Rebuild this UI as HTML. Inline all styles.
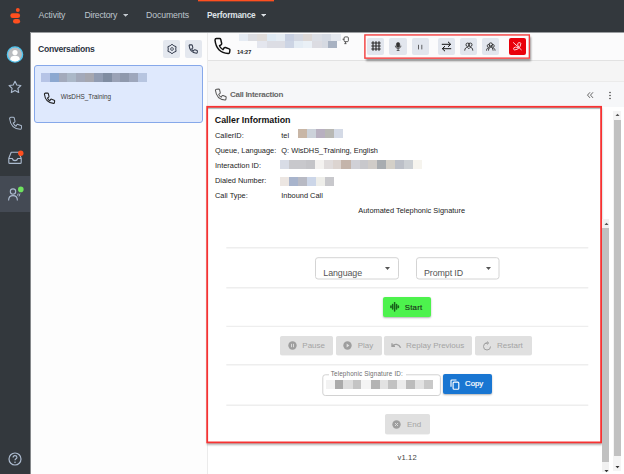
<!DOCTYPE html>
<html lang="en">
<head>
<meta charset="utf-8">
<title>Call Interaction</title>
<style>
*{box-sizing:border-box;margin:0;padding:0}
html,body{width:624px;height:474px;overflow:hidden;background:#fdfdfd;font-family:"Liberation Sans",sans-serif;color:#222}
.abs{position:absolute}
#app{position:relative;width:624px;height:474px;overflow:hidden;background:#fdfdfd}
/* top nav + sidebar */
#topnav{left:0;top:0;width:624px;height:32px;background:#33383d}
#sidebar{left:0;top:0;width:30px;height:474px;background:#33383d}
#sel{left:0;top:176px;width:30px;height:36px;background:#444a54}
.nav{top:9px;font-size:8.7px;line-height:12px;color:#bfc6ce;white-space:nowrap;letter-spacing:-0.1px}
.nav.b{font-weight:bold;color:#dfe3e8;font-size:8.300px;letter-spacing:-0.2px}
.caret{width:0;height:0;border-left:2.8px solid transparent;border-right:2.8px solid transparent;border-top:3px solid #c5cbd1}
#obar{left:198px;top:0;width:76px;height:2px;background:linear-gradient(#ff4f1f 0 50%,#7a4033 50% 100%)}
/* conversations */
#convtitle{left:38px;top:43px;font-size:8.6px;font-weight:bold;color:#2b3342;line-height:12px;letter-spacing:-0.25px}
.sqbtn{width:17.200px;height:17.600px;border-radius:2px;background:#e4e8ef}
#card{left:34px;top:65px;width:169px;height:58px;border:1px solid #86a8ea;border-radius:3px;background:#dfe9fd}
#cardtxt{left:60.800px;top:91.500px;font-size:6.350px;line-height:9px;color:#3a3a3a;}
/* main */
#vline{left:207px;top:32px;width:1px;height:442px;background:#ebebeb}
#topbar{left:208px;top:32px;width:416px;height:29px;background:#fbfbfc;border-bottom:1px solid #e2e2e2}
#strip{left:208px;top:61px;width:416px;height:21px;background:#f5f5f5;border-bottom:1px solid #ebebeb}
#cihead{left:208px;top:82px;width:416px;height:25px;background:#f6f7f9}
#citxt{left:230px;top:89px;font-size:8px;font-weight:bold;color:#666;line-height:12px;letter-spacing:-0.3px}
#time{left:237px;top:48px;font-size:5.6px;font-weight:bold;color:#222;line-height:8px}
#toolbox{left:364.500px;top:34.500px;width:165px;height:24px;background:#fbfbfc;box-shadow:1px 1.500px 2px rgba(0,0,0,.4)}
.tb{top:38.200px;width:17.300px;height:16.500px;border-radius:2px;background:#e2e6ee}
/* red box */
#redbox{left:207px;top:106px;width:395px;height:337px;background:#fff;box-shadow:0 1.500px 2px rgba(0,0,0,.3),inset 0 3px 1px rgba(100,140,140,.55)}
#h1{left:214.800px;top:114px;font-size:8.85px;font-weight:bold;color:#111;line-height:12px}
.lab,.val{font-size:7.400px;line-height:10px;color:#222;white-space:nowrap}
.lab{left:215px}
.val{left:281.3px}
.hr{left:226px;width:362px;height:1px;background:#efefef}
.sel{top:257.300px;width:83.500px;height:22px;border:1px solid #d3d3d3;border-radius:2.5px;background:#fff}
.seltxt{top:266.600px;font-size:8.900px;line-height:12px;color:#555;letter-spacing:-0.1px}
.car2{width:0;height:0;border-left:2.500px solid transparent;border-right:2.500px solid transparent;border-top:2.600px solid #5a5a5a}
.gbtn{top:336px;height:19px;box-shadow:0 0.5px 0.5px rgba(0,0,0,.1);border-radius:2px;background:#e0e0e0}
.gtxt{font-size:8px;line-height:10px;color:#a4a4a4;letter-spacing:0;white-space:nowrap}
</style>
</head>
<body>
<div id="app">
<div id="topnav" class="abs"></div>
<div id="sidebar" class="abs"></div>
<div class="abs" style="left:30px;top:32px;width:594px;height:1px;background:#9a9da0;z-index:5"></div>
<div class="abs" style="left:30px;top:32px;width:1px;height:442px;background:#85888b"></div>
<div id="sel" class="abs"></div>
<div id="obar" class="abs"></div>

<!-- logo -->
<svg class="abs" style="left:8px;top:6px" width="16" height="20" viewBox="0 0 16 20">
 <circle cx="9.8" cy="4" r="1.950" fill="#ff4f1f"/>
 <rect x="2.3" y="7.3" width="9.8" height="4.8" rx="2.4" fill="#ff4f1f"/>
 <rect x="5" y="13" width="7.1" height="4.4" rx="2.2" fill="#ff4f1f"/>
</svg>

<div class="abs nav" style="left:38.6px">Activity</div>
<div class="abs nav" style="left:84.500px;letter-spacing:-0.25px">Directory</div>
<svg class="abs" style="left:122.8px;top:14px" width="5.2" height="2.8" viewBox="0 0 5.2 2.8"><path d="M0 0 H5.2 L2.6 2.8 Z" fill="#c5cbd1"/></svg>
<div class="abs nav" style="left:146px">Documents</div>
<div class="abs nav b" style="left:207px">Performance</div>
<svg class="abs" style="left:261px;top:14px" width="5.2" height="2.8" viewBox="0 0 5.2 2.8"><path d="M0 0 H5.2 L2.6 2.8 Z" fill="#dfe3e8"/></svg>

<!-- sidebar icons -->
<svg class="abs" style="left:6px;top:45px" width="18" height="18" viewBox="0 0 18 18">
 <circle cx="9" cy="9.5" r="7.6" fill="#b9bcc0" stroke="#4fc6f1" stroke-width="1.4"/>
 <circle cx="9" cy="7.6" r="2.6" fill="#fff"/>
 <path d="M4.2 14.6 C4.4 11.6 6.4 10.8 9 10.8 C11.6 10.8 13.6 11.6 13.8 14.6 C12.4 15.9 10.8 16.4 9 16.4 C7.2 16.4 5.6 15.9 4.2 14.6Z" fill="#fff"/>
</svg>
<svg class="abs" style="left:8.200px;top:79.600px" width="14" height="14" viewBox="0 0 14 14">
 <path d="M7 1.2 L8.8 5 L12.9 5.5 L9.9 8.4 L10.7 12.5 L7 10.5 L3.3 12.5 L4.1 8.4 L1.1 5.5 L5.2 5Z" fill="none" stroke="#acbbcf" stroke-width="1.1" stroke-linejoin="round"/>
</svg>
<svg class="abs" style="left:7.700px;top:116px" width="14.74" height="14.5" viewBox="60 62 220 216">
 <path d="M 84 98 Q 86 82 102 81 L 138 79 Q 150 79 153 90 L 164 138 Q 166 150 156 156 L 138 167 Q 150 198 180 214 L 192 194 Q 198 184 210 188 L 254 204 Q 264 208 263 218 L 259 248 Q 257 262 243 261 Q 100 250 84 98 Z" fill="none" stroke="#acbbcf" stroke-width="15" stroke-linejoin="round"/>
</svg>
<svg class="abs" style="left:8px;top:149px" width="17" height="16" viewBox="0 0 17 16">
 <path d="M3.2 3.3 H10.8 L13.2 9.3 V13.4 Q13.2 14.4 12.2 14.4 H1.8 Q0.8 14.4 0.8 13.4 V9.3 Z M0.8 9.5 H4.3 Q4.8 11.6 7 11.6 Q9.2 11.6 9.7 9.5 H13.2" fill="none" stroke="#acbbcf" stroke-width="1.1" stroke-linejoin="round"/>
 <circle cx="12.8" cy="4.300" r="2.700" fill="#ff4f1f"/>
</svg>
<svg class="abs" style="left:7px;top:184px" width="18" height="18" viewBox="0 0 18 18">
 <circle cx="6" cy="7.6" r="2.7" fill="none" stroke="#acbbcf" stroke-width="1.1"/>
 <path d="M1.6 16.5 C1.6 12.6 3.6 11.6 6 11.6 C8.4 11.6 10.4 12.6 10.4 16.5" fill="none" stroke="#acbbcf" stroke-width="1.1"/>
 <path d="M11.2 9.6 L10.6 11.6 M13 9.6 L12 12.4" fill="none" stroke="#acbbcf" stroke-width="1"/>
 <circle cx="13.8" cy="5.400" r="2.800" fill="#6fe35f"/>
</svg>
<svg class="abs" style="left:8px;top:452px" width="14" height="14" viewBox="0 0 14 14">
 <circle cx="7" cy="7" r="6" fill="none" stroke="#acbbcf" stroke-width="1.2"/>
 <path d="M5.1 5.6 C5.1 4.300000000000001 6 3.7 7 3.7 C8 3.7 8.9 4.3 8.9 5.4 C8.9 6.7 7 6.8 7 8.3" fill="none" stroke="#acbbcf" stroke-width="1.2"/>
 <circle cx="7" cy="10.2" r="0.8" fill="#acbbcf"/>
</svg>

<!-- conversations panel -->
<div id="convtitle" class="abs">Conversations</div>
<div class="abs sqbtn" style="left:163px;top:40.200px"></div>
<div class="abs sqbtn" style="left:185px;top:40.200px"></div>
<svg class="abs" style="left:166.800px;top:44px" width="10" height="10" viewBox="0 0 10 10">
 <path d="M5.00 0.30 L6.88 1.75 L9.07 2.65 L8.75 5.00 L9.07 7.35 L6.88 8.25 L5.00 9.70 L3.13 8.25 L0.93 7.35 L1.25 5.00 L0.93 2.65 L3.12 1.75Z" fill="none" stroke="#333b4d" stroke-width="1" stroke-linejoin="round"/>
 <circle cx="5" cy="5" r="1.400" fill="none" stroke="#333b4d" stroke-width="0.800"/>
</svg>
<svg class="abs" style="left:188.100px;top:43.900px" width="10.200" height="10" viewBox="60 62 220 216">
 <path d="M 84 98 Q 86 82 102 81 L 138 79 Q 150 79 153 90 L 164 138 Q 166 150 156 156 L 138 167 Q 150 198 180 214 L 192 194 Q 198 184 210 188 L 254 204 Q 264 208 263 218 L 259 248 Q 257 262 243 261 Q 100 250 84 98 Z" fill="none" stroke="#333b4d" stroke-width="22" stroke-linejoin="round"/>
</svg>
<div id="card" class="abs"></div>
<div class="abs" style="left:41px;top:73px;width:106px;height:9px;background:linear-gradient(90deg,#b6c4e6 0 8.3%,#8ca8d0 8.3% 16.6%,#a3aabc 16.6% 25%,#abb8c8 25% 33.3%,#a3a9ba 33.3% 41.6%,#a6a7b0 41.6% 50%,#919cb2 50% 58.3%,#808da2 58.3% 66.6%,#9aa2b6 66.6% 75%,#8f99ad 75% 83.3%,#9ea7bc 83.3% 91.6%,#b7c5e0 91.6% 100%)"></div>
<svg class="abs" style="left:42.900px;top:92.100px" width="12.65" height="12.4" viewBox="60 62 220 216">
 <path d="M 84 98 Q 86 82 102 81 L 138 79 Q 150 79 153 90 L 164 138 Q 166 150 156 156 L 138 167 Q 150 198 180 214 L 192 194 Q 198 184 210 188 L 254 204 Q 264 208 263 218 L 259 248 Q 257 262 243 261 Q 100 250 84 98 Z" fill="none" stroke="#222" stroke-width="19" stroke-linejoin="round"/>
</svg>
<div id="cardtxt" class="abs">WisDHS_Training</div>

<!-- main area -->
<div id="vline" class="abs"></div>
<div id="topbar" class="abs"></div>
<div id="strip" class="abs"></div>
<div id="cihead" class="abs"></div>
<div class="abs" style="left:208px;top:107px;width:416px;height:367px;background:#fff"></div>
<svg class="abs" style="left:212.55px;top:37.3px" width="18.33" height="18" viewBox="60 62 220 216">
 <path d="M 84 98 Q 86 82 102 81 L 138 79 Q 150 79 153 90 L 164 138 Q 166 150 156 156 L 138 167 Q 150 198 180 214 L 192 194 Q 198 184 210 188 L 254 204 Q 264 208 263 218 L 259 248 Q 257 262 243 261 Q 100 250 84 98 Z" fill="none" stroke="#111" stroke-width="18" stroke-linejoin="round"/>
</svg>
<div id="time" class="abs">14:27</div>
<div class="abs" style="left:239px;top:33.500px;width:102px;height:7px;background:linear-gradient(90deg,#e6ecf4 0 9%,#dcdde2 9% 18%,#e0dcda 18% 27%,#dfeaf4 27% 36%,#e6edf4 36% 45%,#c8d0e2 45% 54%,#d4d8e2 54% 63%,#ddd8d6 63% 72%,#dcdfe6 72% 81%,#d6dbe4 81% 90%,#e4e8ee 90% 100%)"></div>
<div class="abs" style="left:239px;top:40.500px;width:102px;height:7px;background:linear-gradient(90deg,#fbfbfc 0 18%,#e4e6ee 18% 27%,#dcdde4 27% 45%,#ccd4e4 45% 54%,#e4ecf4 54% 63%,#eaf0f6 63% 72%,#dcdce2 72% 81%,#d6dae2 81% 87%,#a8b2c2 87% 96%,#fbfbfc 96% 100%)"></div>
<svg class="abs" style="left:341.800px;top:36.400px" width="7.200" height="9" viewBox="0 0 8 10">
 <rect x="2.300" y="1" width="4.800" height="5.300" rx="1.200" fill="none" stroke="#333" stroke-width="0.900"/>
 <path d="M2.300 3.600 H0.600 M3.800 6.300 V8.300 M2.600 8.500 H5" stroke="#333" stroke-width="0.900" fill="none"/>
</svg>

<div id="toolbox" class="abs"></div>
<div class="abs tb" style="left:367px"></div>
<div class="abs tb" style="left:389.3px"></div>
<div class="abs tb" style="left:411.5px"></div>
<div class="abs tb" style="left:437.7px"></div>
<div class="abs tb" style="left:460px"></div>
<div class="abs tb" style="left:482px"></div>
<div class="abs tb" style="left:508.500px;background:#e9000b;height:17.300px;width:17.700px;top:37.700px"></div>
<!-- toolbar icons -->
<svg class="abs" style="left:370.800px;top:41.200px" width="10" height="10" viewBox="0 0 10 10">
 <path d="M0.3 2 H9.700 M0.3 5 H9.700 M0.3 8 H9.700 M2 0.3 V9.700 M5 0.3 V9.700 M8 0.3 V9.700" stroke="#2a2a2a" stroke-width="1.150" fill="none"/>
</svg>
<svg class="abs" style="left:393.900px;top:41.800px" width="8.200" height="9" viewBox="0 0 10 11">
 <rect x="3" y="0.5" width="4" height="6.200" rx="2" fill="#333" stroke="#222" stroke-width="0.600"/>
 <path d="M1.6 4.500 C1.6 9 8.400 9 8.400 4.500 M5 8 V10 M3.300 10.300 H6.700" stroke="#222" stroke-width="0.900" fill="none"/>
</svg>
<svg class="abs" style="left:416px;top:42.500px" width="8" height="8" viewBox="0 0 8 8">
 <path d="M2.500 1.800 V6.400 M5.800 1.800 V6.400" stroke="#333" stroke-width="0.750"/>
</svg>
<svg class="abs" style="left:441px;top:41px" width="11" height="11" viewBox="0 0 11 11">
 <path d="M0.8 3.300 H9.500 M7 0.8 L9.700 3.300 L7 5.800 M10.200 7.700 H1.500 M4 5.200 L1.300 7.700 L4 10.200" stroke="#111" stroke-width="1" fill="none"/>
</svg>
<svg class="abs" style="left:464px;top:41.900px" width="9.500" height="9.500" viewBox="0 0 11 11">
 <circle cx="4.300" cy="3.200" r="2" fill="none" stroke="#111" stroke-width="0.900"/>
 <circle cx="7.300" cy="3.200" r="2" fill="none" stroke="#111" stroke-width="0.900"/>
 <path d="M0.8 10 C1 6.800 2.800 6.200 4 6.200 L5.600 7.800 L7.200 6.200 C8.600 6.200 10 6.800 10.200 10" fill="none" stroke="#111" stroke-width="0.900"/>
</svg>
<svg class="abs" style="left:486px;top:41.500px" width="9.500" height="9.500" viewBox="0 0 11 11">
 <circle cx="5.500" cy="3" r="2" fill="none" stroke="#111" stroke-width="0.900"/>
 <circle cx="3" cy="4.500" r="1.600" fill="none" stroke="#111" stroke-width="0.800"/>
 <circle cx="8" cy="4.500" r="1.600" fill="none" stroke="#111" stroke-width="0.800"/>
 <path d="M0.5 10 C0.7 7.500 2 6.800 3.200 6.800 M10.500 10 C10.300 7.500 9 6.800 7.800 6.800 M2.800 10 C3 7 4.300 6.200 5.500 6.200 C6.700 6.200 8 7 8.200 10" fill="none" stroke="#111" stroke-width="0.900"/>
</svg>
<svg class="abs" style="left:513px;top:42.300px" width="8.800" height="8.640" viewBox="60 62 220 216">
 <g transform="translate(340 0) scale(-1 1)"><path d="M 84 98 Q 86 82 102 81 L 138 79 Q 150 79 153 90 L 164 138 Q 166 150 156 156 L 138 167 Q 150 198 180 214 L 192 194 Q 198 184 210 188 L 254 204 Q 264 208 263 218 L 259 248 Q 257 262 243 261 Q 100 250 84 98 Z" fill="none" stroke="#ffd9dc" stroke-width="24" stroke-linejoin="round"/></g>
 <path d="M 62 70 L 275 262" stroke="#ffd9dc" stroke-width="24" fill="none"/>
</svg>

<!-- call interaction header -->
<svg class="abs" style="left:213.700px;top:88.200px" width="13.2" height="13" viewBox="60 62 220 216">
 <path d="M 84 98 Q 86 82 102 81 L 138 79 Q 150 79 153 90 L 164 138 Q 166 150 156 156 L 138 167 Q 150 198 180 214 L 192 194 Q 198 184 210 188 L 254 204 Q 264 208 263 218 L 259 248 Q 257 262 243 261 Q 100 250 84 98 Z" fill="none" stroke="#555" stroke-width="17" stroke-linejoin="round"/>
</svg>
<div id="citxt" class="abs">Call Interaction</div>
<svg class="abs" style="left:586px;top:91px" width="9" height="8" viewBox="0 0 9 8">
 <path d="M4 1.300 L1.500 4.100 L4 6.900 M7 1.300 L4.500 4.100 L7 6.900" fill="none" stroke="#555" stroke-width="0.900"/>
</svg>
<svg class="abs" style="left:608px;top:91px" width="4" height="9" viewBox="0 0 4 9">
 <circle cx="2" cy="1.500" r="0.800" fill="#444"/><circle cx="2" cy="4.500" r="0.800" fill="#444"/><circle cx="2" cy="7.500" r="0.800" fill="#444"/>
</svg>

<!-- red box content -->
<div id="redbox" class="abs"></div>
<svg class="abs" style="left:0;top:0;pointer-events:none" width="624" height="474" viewBox="0 0 624 474">
 <rect x="207.200" y="106.800" width="393.900" height="335.600" fill="none" stroke="#f73232" stroke-width="1.800"/>
 <path d="M226.300 247.7 H588.300" stroke="#eeeeee" stroke-width="1.400"/>
 <path d="M226.300 287.7 H588.300" stroke="#eeeeee" stroke-width="1.400"/>
 <path d="M226.300 326.4 H588.300" stroke="#eeeeee" stroke-width="1.400"/>
 <path d="M226.300 364.8 H588.300" stroke="#eeeeee" stroke-width="1.400"/>
 <path d="M226.300 405.3 H588.300" stroke="#eeeeee" stroke-width="1.400"/>
 <rect x="315.500" y="257.700" width="83" height="21.300" rx="2.500" fill="#fff" stroke="#d4d4d4" stroke-width="1"/>
 <rect x="416.500" y="257.700" width="82.500" height="21.300" rx="2.500" fill="#fff" stroke="#d4d4d4" stroke-width="1"/>
 <rect x="322.800" y="374.800" width="117.600" height="20.700" rx="2.500" fill="#fff" stroke="#d2d2d2" stroke-width="1"/>
 <rect x="364.900" y="34.950" width="164.450" height="23.200" fill="none" stroke="#f43c3c" stroke-width="1.400"/>
</svg>
<div id="h1" class="abs">Caller Information</div>
<div class="abs lab" style="top:130.500px">CallerID:</div>
<div class="abs val" style="top:130.500px">tel</div>
<div class="abs lab" style="top:145.500px">Queue, Language:</div>
<div class="abs val" style="top:145.500px">Q: WisDHS_Training, English</div>
<div class="abs lab" style="top:160.500px">Interaction ID:</div>
<div class="abs lab" style="top:175.500px">Dialed Number:</div>
<div class="abs lab" style="top:190.500px">Call Type:</div>
<div class="abs val" style="top:190.500px">Inbound Call</div>
<div class="abs val" style="left:358.300px;top:206px">Automated Telephonic Signature</div>
<!-- blurred values -->
<div class="abs" style="left:298px;top:128.500px;width:45px;height:9px;background:linear-gradient(90deg,#c8b6a6 0 20%,#ccd2da 20% 40%,#b8b0c0 40% 60%,#b8b8b4 60% 80%,#d4dae6 80% 100%)"></div>
<div class="abs" style="left:280px;top:159.500px;width:142px;height:9.500px;background:linear-gradient(90deg,#d8dce6 0 6%,#c8c8cc 6% 18%,#c4c4c8 18% 25%,#f4f2f0 25% 31%,#e0dcdc 31% 37%,#dcd4d0 37% 43%,#c4b4aa 43% 50%,#d0d0d6 50% 56%,#c8c8cc 56% 62%,#d0ccc8 62% 68%,#a8acb0 68% 75%,#d4d0c8 75% 81%,#bcc0c8 81% 87%,#ccd0d4 87% 94%,#f6f4ee 94% 100%)"></div>
<div class="abs" style="left:280px;top:176.500px;width:53.500px;height:9.500px;background:linear-gradient(90deg,#ece6e2 0 17%,#a8b4cc 17% 33%,#b8bac4 33% 50%,#ccd6e8 50% 66%,#eeeeea 66% 83%,#c8c8cc 83% 100%)"></div>


<div class="abs seltxt" style="left:323.300px">Language</div>
<svg class="abs" style="left:385.3px;top:266.8px" width="5" height="2.9" viewBox="0 0 5 2.9"><path d="M0 0 H5 L2.5 2.9 Z" fill="#555"/></svg>
<div class="abs seltxt" style="left:424px">Prompt ID</div>
<svg class="abs" style="left:485.8px;top:266.8px" width="5" height="2.9" viewBox="0 0 5 2.9"><path d="M0 0 H5 L2.5 2.9 Z" fill="#555"/></svg>

<!-- start -->
<div class="abs" style="left:383px;top:297.200px;width:48.200px;height:20px;border-radius:2px;background:#4df24d;box-shadow:0 1px 2px rgba(0,0,0,.3)"></div>
<svg class="abs" style="left:390px;top:302.400px" width="9.500" height="9.500" viewBox="0 0 9.500 9.500">
 <path d="M0.9 4 V5.500 M2.600 2.600 V6.900 M4.600 0.6 V8.900 M6.600 2.600 V6.900 M8.400 4 V5.500" stroke="#17611a" stroke-width="1.500" stroke-linecap="round" fill="none"/>
</svg>
<div class="abs" style="left:404.700px;top:302.500px;font-size:7.800px;line-height:10px;color:#1c301c;-webkit-text-stroke:0.150px #1c301c;letter-spacing:0.250px">Start</div>

<!-- grey buttons -->
<div class="abs gbtn" style="left:280.400px;width:53px"></div>
<div class="abs gbtn" style="left:336px;width:45.700px"></div>
<div class="abs gbtn" style="left:384.300px;width:88px"></div>
<div class="abs gbtn" style="left:475px;width:56.700px"></div>
<svg class="abs" style="left:288px;top:341.300px" width="9" height="9" viewBox="0 0 9 9"><circle cx="4.500" cy="4.500" r="4.200" fill="#9e9e9e"/><path d="M3.500 2.800 V6.200 M5.500 2.800 V6.200" stroke="#e0e0e0" stroke-width="0.900"/></svg>
<div class="abs gtxt" style="left:302.300px;top:341px">Pause</div>
<svg class="abs" style="left:343px;top:341.300px" width="9" height="9" viewBox="0 0 9 9"><circle cx="4.500" cy="4.500" r="4.200" fill="#9e9e9e"/><path d="M3.600 2.600 L6.400 4.500 L3.600 6.400Z" fill="#e0e0e0"/></svg>
<div class="abs gtxt" style="left:357.700px;top:341px">Play</div>
<svg class="abs" style="left:391px;top:342px" width="11" height="8" viewBox="0 0 11 8"><path d="M1 1.200 V4.200 H4 M1.200 4 C3.500 1.400 8 1.700 9.600 5.800" fill="none" stroke="#9e9e9e" stroke-width="1.350"/></svg>
<div class="abs gtxt" style="left:406px;top:341px">Replay Previous</div>
<svg class="abs" style="left:482px;top:340.500px" width="10" height="10" viewBox="0 0 10 10"><path d="M5 2 A3.500 3.500 0 1 0 8.500 5.500 M3.500 2 H6.500 M5 0.5 L6.600 2 L5 3.500" fill="none" stroke="#9e9e9e" stroke-width="1"/></svg>
<div class="abs gtxt" style="left:497px;top:341px">Restart</div>

<!-- signature id -->
<div class="abs" style="left:328.500px;top:370px;width:77.500px;height:8px;background:#fff"></div>
<div class="abs" style="left:330.700px;top:370.100px;font-size:6.300px;line-height:8px;color:#6e6e6e;letter-spacing:0.15px;white-space:nowrap">Telephonic Signature ID:</div>
<div class="abs" style="left:326px;top:380px;width:106.500px;height:9px;background:linear-gradient(90deg,#f2f2f2 0 8%,#aaaaaa 8% 16%,#dddddd 16% 25%,#c4c4c4 25% 33%,#f4f4f4 33% 42%,#b4b4b4 42% 50%,#e2e2e2 50% 58%,#c2c2c2 58% 66%,#ececec 66% 75%,#bcbcbc 75% 83%,#e2e2e2 83% 92%,#c8c8c8 92% 100%)"></div>
<div class="abs" style="left:442.700px;top:374px;width:49px;height:20px;border-radius:2px;background:#1976d2;box-shadow:0 1px 2px rgba(0,0,0,.3)"></div>
<svg class="abs" style="left:450px;top:378.500px" width="10" height="11" viewBox="0 0 10 11"><path d="M1 7.800 V1.800 Q1 1 1.800 1 H6.500" fill="none" stroke="#fff" stroke-width="1.150"/><rect x="3.100" y="3.100" width="5.700" height="7.100" rx="1" fill="none" stroke="#fff" stroke-width="1.150"/></svg>
<div class="abs" style="left:465px;top:379px;font-size:7.800px;line-height:10px;color:#fff;-webkit-text-stroke:0.200px #fff">Copy</div>

<!-- end -->
<div class="abs gbtn" style="left:385px;top:414.200px;width:44.500px;height:19.800px"></div>
<svg class="abs" style="left:392.200px;top:419.500px" width="9" height="9" viewBox="0 0 9 9"><circle cx="4.500" cy="4.500" r="4.200" fill="#9e9e9e"/><path d="M3 3 L6 6 M6 3 L3 6" stroke="#e0e0e0" stroke-width="0.900"/></svg>
<div class="abs gtxt" style="left:407px;top:419.500px">End</div>

<div class="abs" style="left:397.400px;top:452.500px;font-size:7.600px;line-height:10px;color:#444;letter-spacing:0.2px">v1.12</div>

<!-- scrollbars -->
<div class="abs" style="left:602.300px;top:219px;width:7px;height:253px;background:#f1f1f1"></div>
<div class="abs" style="left:602.300px;top:227.500px;width:6.700px;height:234px;background:#c1c1c1"></div>
<div class="abs" style="left:613px;top:110.500px;width:8px;height:360px;background:#f4f4f4"></div>
<div class="abs" style="left:614px;top:119.700px;width:6.500px;height:336px;background:#c1c1c1"></div>
<svg class="abs" style="left:603.500px;top:221.500px" width="5" height="4" viewBox="0 0 5 4"><path d="M0.5 3 L2.500 0.8 L4.500 3Z" fill="#555"/></svg>
<svg class="abs" style="left:603.500px;top:468.500px" width="5" height="4" viewBox="0 0 5 4"><path d="M0.5 1 L2.500 3.200 L4.500 1Z" fill="#333"/></svg>
<svg class="abs" style="left:614.700px;top:113px" width="5" height="4" viewBox="0 0 5 4"><path d="M0.5 3 L2.500 0.8 L4.500 3Z" fill="#555"/></svg>
<svg class="abs" style="left:614.700px;top:464.500px" width="5" height="4" viewBox="0 0 5 4"><path d="M0.5 1 L2.500 3.200 L4.500 1Z" fill="#333"/></svg>
</div>
</body>
</html>
